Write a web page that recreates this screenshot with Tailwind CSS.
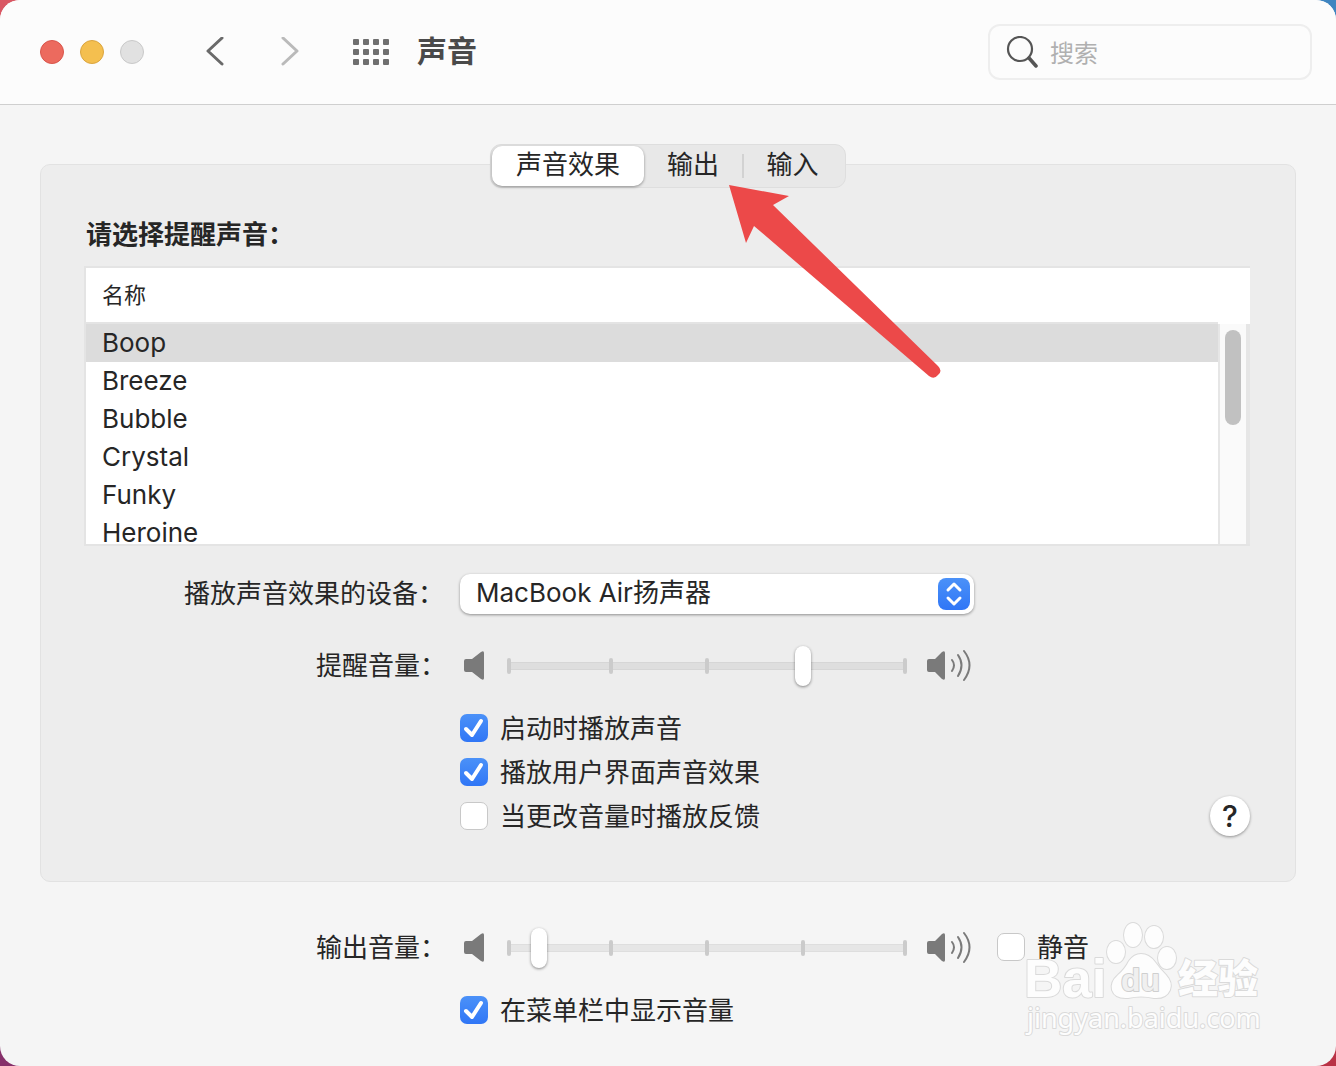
<!DOCTYPE html>
<html lang="zh-CN">
<head>
    <meta charset="UTF-8">
    <meta name="viewport" content="width=device-width, initial-scale=1.0">
    <title>声音</title>
    <script src="https://cdn.jsdelivr.net/npm/@tailwindcss/browser@4"></script>
</head>
<body class="bg-[conic-gradient(#3f85c0_25%,#b93245_25%_50%,#86306a_50%_75%,#d95763_75%)] font-['Inter','Noto_Sans_CJK_SC',sans-serif] text-[26px] leading-9 text-[#262626]">
    <!-- Shared icons -->
    <svg class="hidden">
        <symbol id="speaker" viewBox="0 0 24 30">
            <path d="M6 8h6l9-7q3-2 3 1v25q0 3-3 1l-9-7H6q-2 0-2-2v-9q0-2 2-2z" fill="#7a7a7a"/>
        </symbol>
        <symbol id="speaker-loud" viewBox="0 0 48 34">
            <path d="M3 10h6l7-7q3-2 3 1v25q0 3-3 1l-7-7H3q-2 0-2-2v-9q0-2 2-2z" fill="#7a7a7a"/>
            <path d="M26 11q4 5 0 11M32 6q7 10 0 21M38 2q11 14 0 29" fill="none" stroke="#7a7a7a" stroke-width="2" stroke-linecap="round"/>
        </symbol>
        <symbol id="ticks" viewBox="0 0 400 16">
            <g fill="#cbcbcb">
                <rect x="0" width="4" height="16" rx="2"/>
                <rect x="102" width="4" height="16" rx="2"/>
                <rect x="198" width="4" height="16" rx="2"/>
                <rect x="294" width="4" height="16" rx="2"/>
                <rect x="396" width="4" height="16" rx="2"/>
            </g>
        </symbol>
        <symbol id="check" viewBox="0 0 28 28">
            <path d="M6 15l6 6L21 7" fill="none" stroke="#fff" stroke-width="4" stroke-linecap="round" stroke-linejoin="round"/>
        </symbol>
    </svg>

    <div class="relative min-h-screen overflow-hidden rounded-[20px] bg-[#f5f5f5]">
        <!-- Toolbar -->
        <header class="flex h-[105px] items-center border-b border-[#cfcfcf] bg-[#fcfcfc] pr-6 pl-10">
            <div class="flex gap-4">
                <button aria-label="关闭" class="size-6 rounded-full border border-[#d9554b] bg-[#ec6a5e]"></button>
                <button aria-label="最小化" class="size-6 rounded-full border border-[#dba53f] bg-[#f4bf4f]"></button>
                <button aria-label="缩放" class="size-6 rounded-full border border-[#c9c9c9] bg-[#e1e1e1]"></button>
            </div>
            <button aria-label="后退" class="ml-[61px]">
                <svg class="block h-[30px] w-5" viewBox="0 0 20 30" fill="none" stroke="#6a6a6a" stroke-width="3" stroke-linecap="round" stroke-linejoin="round"><path d="M17 1L3 14l14 13"/></svg>
            </button>
            <button aria-label="前进" class="ml-[55px]">
                <svg class="block h-[30px] w-5" viewBox="0 0 20 30" fill="none" stroke="#bababa" stroke-width="3" stroke-linecap="round" stroke-linejoin="round"><path d="M3 1l14 13L3 27"/></svg>
            </button>
            <button aria-label="显示全部" class="ml-[53px]">
                <svg class="block h-[26px] w-9" viewBox="0 0 36 26" fill="#6f6f6f">
                    <rect x="0" y="0" width="6" height="6" rx="1"/><rect x="10" y="0" width="6" height="6" rx="1"/><rect x="20" y="0" width="6" height="6" rx="1"/><rect x="30" y="0" width="6" height="6" rx="1"/>
                    <rect x="0" y="10" width="6" height="6" rx="1"/><rect x="10" y="10" width="6" height="6" rx="1"/><rect x="20" y="10" width="6" height="6" rx="1"/><rect x="30" y="10" width="6" height="6" rx="1"/>
                    <rect x="0" y="20" width="6" height="6" rx="1"/><rect x="10" y="20" width="6" height="6" rx="1"/><rect x="20" y="20" width="6" height="6" rx="1"/><rect x="30" y="20" width="6" height="6" rx="1"/>
                </svg>
            </button>
            <h1 class="ml-7 pb-[2px] text-[30px] font-bold text-[#4a4a4a]">声音</h1>
            <label class="ml-auto flex h-14 w-[324px] items-center gap-3 rounded-xl border-2 border-[#eeeeee] px-4">
                <svg class="block size-8 shrink-0" viewBox="0 0 32 32" fill="none" stroke="#555" stroke-linecap="round"><circle cx="14" cy="13" r="12" stroke-width="2.200"/><path d="M23 22l7 8" stroke-width="3.500"/></svg>
                <input type="search" placeholder="搜索" aria-label="搜索" class="w-full min-w-0 bg-transparent pt-1 text-2xl outline-none placeholder:text-[#b0b0b0]">
            </label>
        </header>

        <main class="px-10 pt-[39px]">
            <!-- Tabs -->
            <div class="relative z-10 mx-auto flex h-11 w-[356px] items-center rounded-[11px] border border-[#dedede] bg-[#e8e8e8] pl-px">
                <button class="h-10 w-[152px] rounded-[10px] bg-white pb-[2px] shadow-[0_1px_3px_#00000066]">声音效果</button>
                <button class="w-[98px] pb-[2px]">输出</button>
                <span class="h-6 w-[2px] bg-[#d2d2d2]"></span>
                <button class="flex-1 pr-1 pb-[2px]">输入</button>
                <!-- Pointer to the output tab -->
                <svg class="pointer-events-none absolute top-10 left-[238px] h-[194px] w-[212px]" viewBox="0 0 212 194" fill="#ec4949">
                    <path d="M0 0L60 11L44 20L209 181Q214 186 209 190Q205 195 200 191L25 41L17 58Z"/>
                </svg>
            </div>

            <section class="-mt-6 rounded-[10px] border border-[#e2e2e2] bg-[#ededed] pt-13 pr-[45px] pb-[43px] pl-[43px]">
                <h2 class="pl-[2px] font-bold">请选择提醒声音：</h2>

                <div class="mt-[13px] h-[280px] overflow-hidden border-y-2 border-l-2 border-[#e4e4e4] bg-white">
                    <table class="w-full border-separate border-spacing-0 text-left">
                        <thead>
                            <tr>
                                <th class="h-14 border-b-2 border-[#e4e4e4] p-0 pl-4 text-[22px] font-normal">名称</th>
                                <th class="w-8 p-0" aria-label="滚动条"></th>
                            </tr>
                        </thead>
                        <tbody>
                            <tr class="bg-[#dcdcdc]">
                                <td class="h-[38px] p-0 pl-4">Boop</td>
                                <td rowspan="6" class="border-r-4 border-l-2 border-[#e6e6e6] bg-[#fafafa] p-0 align-top">
                                    <div class="mx-auto mt-[6px] h-[95px] w-4 rounded-full bg-[#c1c1c1]"></div>
                                </td>
                            </tr>
                            <tr><td class="h-[38px] p-0 pl-4">Breeze</td></tr>
                            <tr><td class="h-[38px] p-0 pl-4">Bubble</td></tr>
                            <tr><td class="h-[38px] p-0 pl-4">Crystal</td></tr>
                            <tr><td class="h-[38px] p-0 pl-4">Funky</td></tr>
                            <tr><td class="h-[38px] p-0 pl-4">Heroine</td></tr>
                        </tbody>
                    </table>
                </div>

                <div class="mt-7 flex items-center gap-[14px]">
                    <label for="device" class="w-[362px] shrink-0 pr-[2px] text-right">播放声音效果的设备：</label>
                    <div class="grid h-10 w-[514px] items-center">
                        <select id="device" class="col-start-1 row-start-1 h-10 w-full appearance-none rounded-[10px] bg-white pb-[2px] pl-4 shadow-[0_1px_3px_#00000066]">
                            <option>MacBook Air扬声器</option>
                        </select>
                        <svg class="pointer-events-none col-start-1 row-start-1 mr-1 size-8 justify-self-end rounded-lg bg-linear-to-b from-[#4b91f8] to-[#3076f6]" viewBox="0 0 32 32" fill="none" stroke="#fff" stroke-width="3" stroke-linecap="round" stroke-linejoin="round"><path d="M10 12l6-6 6 6M10 20l6 6 6-6"/></svg>
                    </div>
                </div>

                <div class="mt-8 flex items-center gap-[14px]">
                    <label for="alert" class="w-[362px] shrink-0 text-right">提醒音量：</label>
                    <div class="flex h-10 w-[514px] items-center">
                        <svg class="h-[30px] w-6"><use href="#speaker"/></svg>
                        <div class="mr-[19px] ml-[23px] grid flex-1 items-center">
                            <span class="col-start-1 row-start-1 mx-[2px] h-2 border-y border-[#d6d6d6] bg-[#dedede]"></span>
                            <svg class="col-start-1 row-start-1 h-4 w-full"><use href="#ticks"/></svg>
                            <input id="alert" type="range" min="0" max="16" value="12" class="z-1 col-start-1 row-start-1 h-10 w-full appearance-none bg-transparent [&::-webkit-slider-thumb]:h-10 [&::-webkit-slider-thumb]:w-4 [&::-webkit-slider-thumb]:appearance-none [&::-webkit-slider-thumb]:rounded-full [&::-webkit-slider-thumb]:bg-white [&::-webkit-slider-thumb]:shadow-[0_1px_3px_#00000073]">
                        </div>
                        <svg class="h-[34px] w-12"><use href="#speaker-loud"/></svg>
                    </div>
                </div>

                <div class="mt-5 pl-[376px]">
                    <label class="flex h-11 items-center gap-3">
                        <span class="grid">
                            <input type="checkbox" checked class="peer col-start-1 row-start-1 size-7 appearance-none rounded-[7px] border border-[#c8c8c8] bg-white checked:border-0 checked:bg-linear-to-b checked:from-[#4b91f8] checked:to-[#3076f6]">
                            <svg class="invisible col-start-1 row-start-1 size-7 peer-checked:visible"><use href="#check"/></svg>
                        </span>
                        <span class="pt-[2px]">启动时播放声音</span>
                    </label>
                    <label class="flex h-11 items-center gap-3">
                        <span class="grid">
                            <input type="checkbox" checked class="peer col-start-1 row-start-1 size-7 appearance-none rounded-[7px] border border-[#c8c8c8] bg-white checked:border-0 checked:bg-linear-to-b checked:from-[#4b91f8] checked:to-[#3076f6]">
                            <svg class="invisible col-start-1 row-start-1 size-7 peer-checked:visible"><use href="#check"/></svg>
                        </span>
                        <span class="pt-[2px]">播放用户界面声音效果</span>
                    </label>
                    <div class="flex h-11 items-center justify-between">
                        <label class="flex items-center gap-3">
                            <span class="grid">
                                <input type="checkbox" class="peer col-start-1 row-start-1 size-7 appearance-none rounded-[7px] border border-[#c8c8c8] bg-white checked:border-0 checked:bg-linear-to-b checked:from-[#4b91f8] checked:to-[#3076f6]">
                                <svg class="invisible col-start-1 row-start-1 size-7 peer-checked:visible"><use href="#check"/></svg>
                            </span>
                            <span class="pt-[2px]">当更改音量时播放反馈</span>
                        </label>
                        <button class="size-10 rounded-full bg-white text-[30px] font-medium shadow-[0_1px_3px_#00000066]">?</button>
                    </div>
                </div>
            </section>

            <!-- Output volume -->
            <section class="pt-[46px] pb-8 pl-11">
                <div class="flex items-center gap-[14px]">
                    <label for="output" class="w-[362px] shrink-0 text-right">输出音量：</label>
                    <div class="flex h-10 w-[514px] items-center">
                        <svg class="h-[30px] w-6"><use href="#speaker"/></svg>
                        <div class="mr-[19px] ml-[23px] grid flex-1 items-center">
                            <span class="col-start-1 row-start-1 mx-[2px] h-2 border-y border-[#dedede] bg-[#e6e6e6]"></span>
                            <svg class="col-start-1 row-start-1 h-4 w-full"><use href="#ticks"/></svg>
                            <input id="output" type="range" min="0" max="16" value="1" class="z-1 col-start-1 row-start-1 h-10 w-full appearance-none bg-transparent [&::-webkit-slider-thumb]:h-10 [&::-webkit-slider-thumb]:w-4 [&::-webkit-slider-thumb]:appearance-none [&::-webkit-slider-thumb]:rounded-full [&::-webkit-slider-thumb]:bg-white [&::-webkit-slider-thumb]:shadow-[0_1px_3px_#00000073]">
                        </div>
                        <svg class="h-[34px] w-12"><use href="#speaker-loud"/></svg>
                    </div>
                    <label class="mb-[2px] ml-[9px] flex items-center gap-3">
                        <span class="grid">
                            <input type="checkbox" class="peer col-start-1 row-start-1 size-7 appearance-none rounded-[7px] border border-[#c8c8c8] bg-white checked:border-0 checked:bg-linear-to-b checked:from-[#4b91f8] checked:to-[#3076f6]">
                            <svg class="invisible col-start-1 row-start-1 size-7 peer-checked:visible"><use href="#check"/></svg>
                        </span>
                        <span class="pt-[2px]">静音</span>
                    </label>
                </div>
                <label class="mt-5 ml-[376px] flex h-11 items-center gap-3">
                    <span class="grid">
                        <input type="checkbox" checked class="peer col-start-1 row-start-1 size-7 appearance-none rounded-[7px] border border-[#c8c8c8] bg-white checked:border-0 checked:bg-linear-to-b checked:from-[#4b91f8] checked:to-[#3076f6]">
                        <svg class="invisible col-start-1 row-start-1 size-7 peer-checked:visible"><use href="#check"/></svg>
                    </span>
                    <span class="pt-[2px]">在菜单栏中显示音量</span>
                </label>
            </section>
        </main>

        <!-- Watermark -->
        <svg class="pointer-events-none absolute right-[66px] bottom-6 h-[122px] w-[250px] font-['Liberation_Sans','Noto_Sans_CJK_SC',sans-serif]" viewBox="0 0 250 122" fill="#fdfdfd" stroke="#dadada" stroke-width="2" paint-order="stroke" stroke-linejoin="round">
            <text x="4" y="77" font-size="53" font-weight="700">Bai</text>
            <ellipse cx="96" cy="32" rx="9" ry="11"/>
            <ellipse cx="113" cy="15" rx="9" ry="12"/>
            <ellipse cx="134" cy="17" rx="9" ry="11"/>
            <ellipse cx="147" cy="38" rx="9" ry="11"/>
            <path d="M121 34Q129 34 135 42Q140 49 146 55Q153 63 150 70Q146 79 134 78Q121 75 108 78Q95 79 92 70Q90 62 98 55Q105 49 109 41Q114 34 121 34Z"/>
            <text x="101" y="71" font-size="32" font-weight="700" stroke="#cfcfcf" fill="#f0f0f0">du</text>
            <text x="158" y="73" font-size="40" font-weight="900" font-family="Noto Sans CJK SC">经验</text>
            <text x="7" y="108" font-size="27" font-family="Noto Sans">jingyan.baidu.com</text>
        </svg>
    </div>
</body>
</html>
